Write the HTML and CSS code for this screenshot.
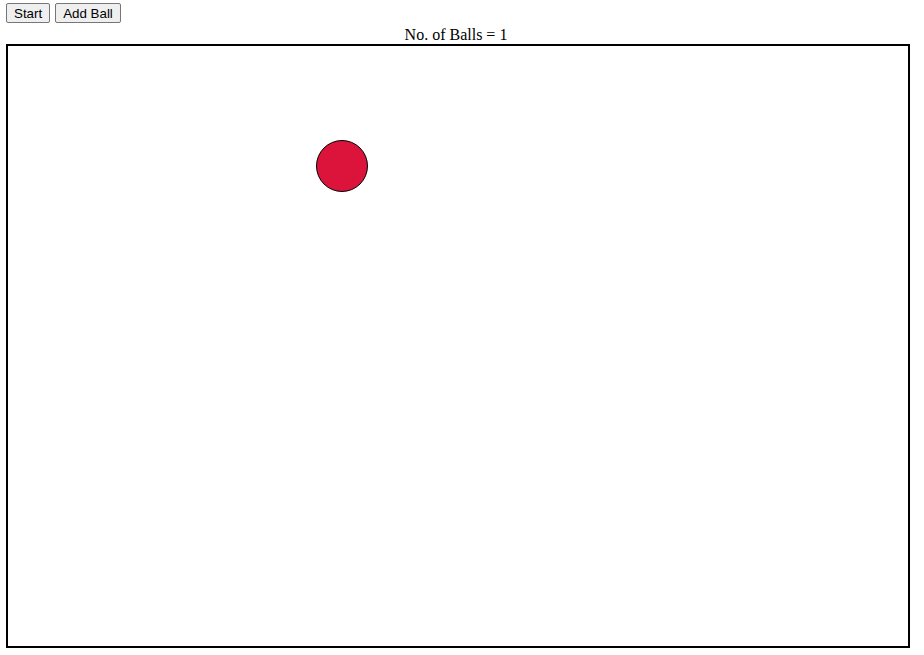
FILE: index.html
```html
<!DOCTYPE html>
<html>
<head>
<meta charset="utf-8">
<link rel="stylesheet" href="styles.css">
</head>
<body>
<div class="controls"><button class="btn">Start</button> <button class="btn">Add Ball</button></div>
<div class="count">No. of Balls = 1</div>
<div class="board">
<svg class="field" width="900" height="600" viewBox="0 0 900 600" xmlns="http://www.w3.org/2000/svg">
<circle cx="334" cy="120" r="25.5" fill="#dc143c" stroke="#000" stroke-width="1"/>
</svg>
</div>
</body>
</html>
```
FILE: styles.css
```css
html, body { background: #fff; }
body {
  margin: 3px 6px;
  font-family: "Liberation Serif", "Times New Roman", serif;
  font-size: 16px;
  color: #000;
}
.controls {
  display: flex;
  gap: 5px;
  height: 21px;
}
.btn {
  font-family: "Liberation Sans", Arial, sans-serif;
  font-size: 13.33px;
  height: 20px;
  padding: 0 7px;
  border: 1px solid #767676;
  border-radius: 2px;
  background: #efefef;
  color: #000;
}
.count {
  width: 900px;
  text-align: center;
  line-height: 18px;
  margin-top: 2px;
}
.board {
  width: 900px;
  height: 600px;
  border: 2px solid #000;
  margin-top: 0;
}
.field { display: block; }
```
